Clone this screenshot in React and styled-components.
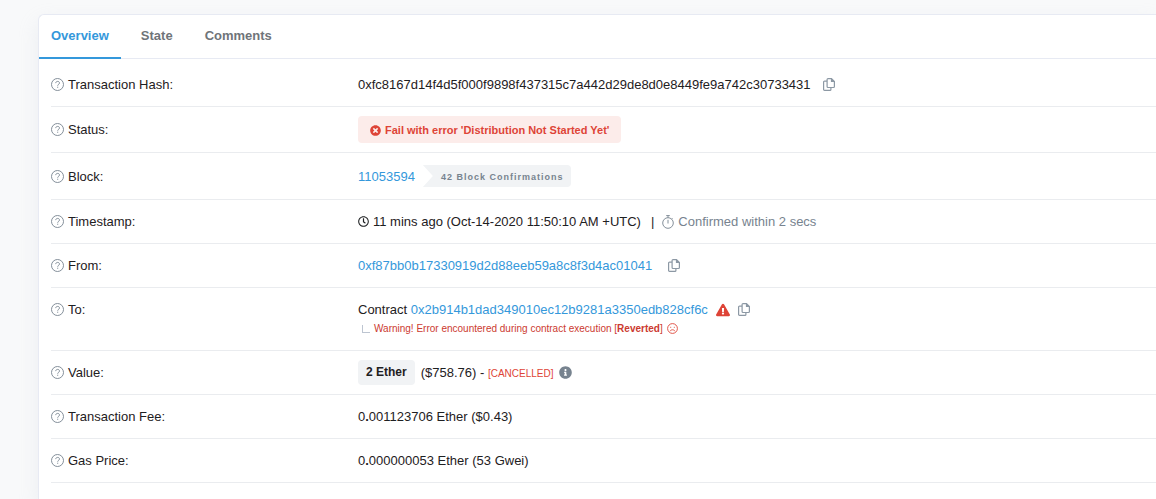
import React from 'react';
import styled, { createGlobalStyle } from 'styled-components';
import {
  FaTimesCircle,
  FaExclamationTriangle,
  FaInfoCircle,
  FaRegClock,
} from 'react-icons/fa';

const GlobalStyle = createGlobalStyle`
  * {
    box-sizing: border-box;
  }

  body {
    margin: 0;
    background-color: #f8f9fa;
    color: #1e2022;
    font-family: 'Liberation Sans', Arial, sans-serif;
    font-size: 13px;
    line-height: 19px;
  }
`;

const HelpIcon = () => (
  <LineIcon width="13" height="13" viewBox="0 0 13 13" aria-hidden="true">
    <circle cx="6.5" cy="6.5" r="6" />
    <path d="M4.7 5.1C4.8 4 5.6 3.4 6.6 3.4c1.1 0 1.9.6 1.9 1.6C8.5 6.3 6.7 6.3 6.7 7.7" />
    <path d="M6.7 8.7v1.1" />
  </LineIcon>
);

const StopwatchIcon = () => (
  <LineIcon width="12" height="14" viewBox="0 0 12 14" aria-hidden="true">
    <circle cx="6" cy="8" r="5.3" />
    <path d="M4.2.6h3.6M6 .6v2.1M6 4.8v3.7M9.6 4.1l.9-.9" />
  </LineIcon>
);

const FrownIcon = () => (
  <LineIcon $color="#de4437" width="11" height="11" viewBox="0 0 11 11" aria-hidden="true">
    <circle cx="5.5" cy="5.5" r="4.9" />
    <path d="M3.2 7.9c1.2-1.5 3.4-1.5 4.6 0M3.7 3.8v1M7.3 3.8v1" />
  </LineIcon>
);

const CopyIcon = () => (
  <LineIcon $color="#8c98a4" $weight={1.2} width="12" height="13" viewBox="0 0 12 13" aria-hidden="true">
    <path d="M8.5.6H5a.9.9 0 0 0-.9.9v7.1a.9.9 0 0 0 .9.9h5.5a.9.9 0 0 0 .9-.9V3.500L8.5.6v2.900h2.900" />
    <path d="M4.100 3.100H1.500a.9.9 0 0 0-.9.9v7.500a.9.9 0 0 0 .9.9h5.500a.9.9 0 0 0 .9-.9v-2" />
  </LineIcon>
);

const Copy = ({ label }) => (
  <IconButton type="button" aria-label={label}>
    <CopyIcon />
  </IconButton>
);

const Row = ({ label, tight, top, children }) => (
  <RowBox $tight={tight} $top={top}>
    <Label>
      <HelpIcon />
      {label}
    </Label>
    <Value>{children}</Value>
  </RowBox>
);

const App = () => (
  <>
    <GlobalStyle />
    <Page>
      <Card>
        <Tabs role="tablist">
          <Tab type="button" role="tab" aria-selected="true" $active>
            Overview
          </Tab>
          <Tab type="button" role="tab" aria-selected="false">
            State
          </Tab>
          <Tab type="button" role="tab" aria-selected="false">
            Comments
          </Tab>
        </Tabs>
        <Details>
          <Row label="Transaction Hash:">
            <Line $gap={12}>
              <span>0xfc8167d14f4d5f000f9898f437315c7a442d29de8d0e8449fe9a742c30733431</span>
              <Copy label="Copy transaction hash" />
            </Line>
          </Row>
          <Row label="Status:" tight>
            <Status>
              <FaTimesCircle size={11} />
              Fail with error 'Distribution Not Started Yet'
            </Status>
          </Row>
          <Row label="Block:">
            <Line $gap={8}>
              <Link href="#block">11053594</Link>
              <Confirmations>42 Block Confirmations</Confirmations>
            </Line>
          </Row>
          <Row label="Timestamp:">
            <Line $gap={4}>
              <FaRegClock size={11} />
              <span>11 mins ago (Oct-14-2020 11:50:10 AM +UTC)</span>
              <Divider>|</Divider>
              <Muted>
                <StopwatchIcon />
                Confirmed within 2 secs
              </Muted>
            </Line>
          </Row>
          <Row label="From:">
            <Line $gap={16}>
              <Link href="#from">0xf87bb0b17330919d2d88eeb59a8c8f3d4ac01041</Link>
              <Copy label="Copy sender address" />
            </Line>
          </Row>
          <Row label="To:" top>
            <Line $gap={8}>
              <span>
                Contract <Link href="#to">0x2b914b1dad349010ec12b9281a3350edb828cf6c</Link>
              </span>
              <Alert size={14} />
              <Copy label="Copy contract address" />
            </Line>
            <Warning>
              <Elbow />
              <span>
                Warning! Error encountered during contract execution [<b>Reverted</b>]
              </span>
              <FrownIcon />
            </Warning>
          </Row>
          <Row label="Value:" tight>
            <Line $gap={6}>
              <Amount>2 Ether</Amount>
              <span>
                ($758.76) - <Cancelled>[CANCELLED]</Cancelled>
              </span>
              <Info size={13} />
            </Line>
          </Row>
          <Row label="Transaction Fee:">
            <span>
              0<b>.</b>001123706 Ether ($0.43)
            </span>
          </Row>
          <Row label="Gas Price:">
            <span>
              0<b>.</b>000000053 Ether (53 Gwei)
            </span>
          </Row>
        </Details>
      </Card>
    </Page>
  </>
);

export default App;

// Styled Components
const Page = styled.main`
  padding: 14px 0 0 38px;
`;

const Card = styled.section`
  min-height: calc(100vh - 14px);
  background-color: #fff;
  border: 1px solid #e7eaf3;
  border-width: 1px 0 0 1px;
  border-top-left-radius: 6px;
  box-shadow: 0 8px 20px rgba(189, 197, 209, 0.2);
`;

const Tabs = styled.div`
  display: flex;
  gap: 8px;
  border-bottom: 1px solid #e7eaf3;
`;

const Tab = styled.button`
  height: 44px;
  margin-bottom: -1px;
  padding: 0 12px 1px;
  background: none;
  border: 0;
  border-bottom: 2px solid ${(props) => (props.$active ? '#3498db' : 'transparent')};
  color: ${(props) => (props.$active ? '#3498db' : '#6f7479')};
  font: bold 13px/19px 'Liberation Sans', Arial, sans-serif;
  cursor: pointer;
`;

const Details = styled.div`
  padding: 4px 0 0 12px;
`;

const RowBox = styled.div`
  display: grid;
  grid-template-columns: 307px 1fr;
  align-items: ${(props) => (props.$top ? 'start' : 'center')};
  padding: ${(props) => (props.$tight ? '9px' : '12px')} 0;
  border-bottom: 1px solid #eaecef;
`;

const Label = styled.div`
  display: flex;
  align-items: center;
  gap: 4px;
`;

const Value = styled.div`
  white-space: nowrap;
`;

const Line = styled.div`
  display: flex;
  align-items: center;
  gap: ${(props) => props.$gap}px;
`;

const LineIcon = styled.svg`
  flex: none;
  fill: none;
  stroke: ${(props) => props.$color || '#77838f'};
  stroke-width: ${(props) => props.$weight || 0.9};
`;

const IconButton = styled.button`
  display: flex;
  padding: 0;
  background: none;
  border: 0;
  cursor: pointer;
`;

const Link = styled.a`
  color: #3498db;
  text-decoration: none;
`;

const Status = styled.span`
  display: inline-flex;
  align-items: center;
  gap: 4px;
  height: 27px;
  padding: 1px 12px 0;
  background-color: #fcecea;
  border-radius: 4px;
  color: #de4437;
  font-size: 11px;
  font-weight: bold;
  vertical-align: top;
`;

const Confirmations = styled.span`
  height: 22px;
  padding: 0 8px 0 18px;
  background-color: #f1f3f5;
  border-radius: 0 4px 4px 0;
  clip-path: polygon(0 0, 100% 0, 100% 100%, 0 100%, 10px 50%);
  color: #77838f;
  font-size: 9px;
  font-weight: bold;
  line-height: 24px;
  letter-spacing: 1px;
`;

const Divider = styled.span`
  margin: 0 4px 0 6px;
`;

const Muted = styled.span`
  display: flex;
  align-items: center;
  gap: 4px;
  color: #77838f;
`;

const Alert = styled(FaExclamationTriangle)`
  color: #de4437;
`;

const Warning = styled.div`
  display: flex;
  align-items: center;
  gap: 4px;
  padding-left: 4px;
  color: #cc3a30;
  font-size: 10px;
`;

const Elbow = styled.span`
  width: 8px;
  height: 8px;
  border: 1px solid #bdc5d1;
  border-width: 0 0 1px 1px;
`;

const Amount = styled.span`
  padding: 3px 8px;
  background-color: #f1f3f5;
  border-radius: 4px;
  font-size: 12px;
  font-weight: bold;
`;

const Cancelled = styled.small`
  color: #de4437;
  font-size: 10px;
`;

const Info = styled(FaInfoCircle)`
  color: #77838f;
`;
